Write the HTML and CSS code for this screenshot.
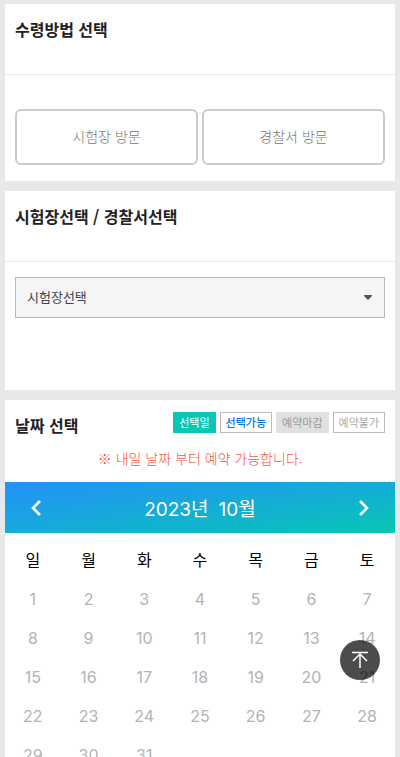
FILE: index.html
```html
<!DOCTYPE html>
<html lang="ko">
<head>
    <meta charset="UTF-8">
    <meta name="viewport" content="width=device-width, initial-scale=1.0">
    <title>방문 예약</title>
    <link rel="stylesheet" href="styles.css">
</head>
<body>
    <section class="card">
        <div class="card-head">
            <h2>수령방법 선택</h2>
        </div>
        <div class="method-list">
            <button type="button" class="method-btn">시험장 방문</button>
            <button type="button" class="method-btn">경찰서 방문</button>
        </div>
    </section>

    <section class="card">
        <div class="card-head">
            <h2><label for="place">시험장선택 / 경찰서선택</label></h2>
        </div>
        <div class="place-box">
            <select id="place">
                <option selected>시험장선택</option>
            </select>
            <svg class="caret" width="8" height="5" viewBox="0 0 8 5"><path d="M0 0h8v1L4 5 0 1z" fill="#555"/></svg>
        </div>
    </section>

    <section class="card">
        <div class="date-head">
            <h2>날짜 선택</h2>
            <ul class="legend">
                <li class="picked">선택일</li>
                <li class="open">선택가능</li>
                <li class="closed">예약마감</li>
                <li class="disabled">예약불가</li>
            </ul>
        </div>
        <p class="notice">※ 내일 날짜 부터 예약 가능합니다.</p>
        <div class="month-bar">
            <button type="button" class="month-nav" aria-label="이전 달">
                <svg width="12" height="16" viewBox="0 0 12 16"><path d="M10 1L3 8l7 7" fill="none" stroke="#fff" stroke-width="2.600"/></svg>
            </button>
            <strong class="month"><span>2023년</span><span>10월</span></strong>
            <button type="button" class="month-nav" aria-label="다음 달">
                <svg width="12" height="16" viewBox="0 0 12 16"><path d="M2 1l7 7-7 7" fill="none" stroke="#fff" stroke-width="2.600"/></svg>
            </button>
        </div>
        <table class="calendar">
            <thead>
                <tr><th>일</th><th>월</th><th>화</th><th>수</th><th>목</th><th>금</th><th>토</th></tr>
            </thead>
            <tbody>
                <tr><td>1</td><td>2</td><td>3</td><td>4</td><td>5</td><td>6</td><td>7</td></tr>
                <tr><td>8</td><td>9</td><td>10</td><td>11</td><td>12</td><td>13</td><td>14</td></tr>
                <tr><td>15</td><td>16</td><td>17</td><td>18</td><td>19</td><td>20</td><td>21</td></tr>
                <tr><td>22</td><td>23</td><td>24</td><td>25</td><td>26</td><td>27</td><td>28</td></tr>
                <tr><td>29</td><td>30</td><td>31</td><td></td><td></td><td></td><td></td></tr>
            </tbody>
        </table>
    </section>

    <button type="button" class="top-btn" aria-label="맨 위로">
        <svg width="16" height="18" viewBox="0 0 16 18" fill="none" stroke="#fff" stroke-width="1.500"><path d="M0 1.500h16M8 3v14M1 10l7-7 7 7"/></svg>
    </button>
</body>
</html>
```
FILE: styles.css
```css
* {
    box-sizing: border-box;
}

body {
    margin: 0;
    padding: 4px 5px;
    background: #e8e8e8;
    font-family: "Noto Sans CJK KR", sans-serif;
    font-size: 14px;
    color: #222;
}

h2, p, ul {
    margin: 0;
    padding: 0;
}

h2 {
    font-size: 16px;
    line-height: 24px;
    font-weight: 700;
}

button, select {
    font-family: inherit;
    cursor: pointer;
}

.card {
    background: #fff;
    margin-bottom: 10px;
}

.card-head {
    padding: 13px 10px 33px;
    border-bottom: 1px solid #e8e8e8;
}

/* pickup method */
.method-list {
    display: flex;
    gap: 4px;
    padding: 34px 10px 16px;
}

.method-btn {
    flex: 1;
    height: 56px;
    padding: 0 0 2px;
    background: #fff;
    border: 2px solid #ccc;
    border-radius: 6px;
    font-size: 14px;
    font-weight: 300;
    color: #777;
}

/* place */
.place-box {
    position: relative;
    padding: 15px 10px 72px;
}

.place-box select {
    display: block;
    width: 100%;
    height: 41px;
    padding: 0 11px 2px;
    appearance: none;
    background: #f5f5f5;
    border: 1px solid #b7b7b7;
    border-radius: 0;
    font-size: 13px;
    color: #444;
}

.caret {
    position: absolute;
    top: 33px;
    right: 23px;
    pointer-events: none;
}

/* date */
.date-head {
    display: flex;
    justify-content: space-between;
    padding: 12px 10px 0;
}

.date-head h2 {
    padding-top: 1px;
}

.legend {
    display: flex;
    gap: 4px;
    list-style: none;
}

.legend li {
    height: 21px;
    padding: 0 5px;
    border: 1px solid #bbb;
    font-size: 11px;
    line-height: 18px;
}

.legend .picked {
    background: #08c7b5;
    border-color: #08c7b5;
    color: #fff;
}

.legend .open {
    font-weight: 500;
    color: #0075e8;
}

.legend .closed {
    background: #e0e0e0;
    border-color: #e0e0e0;
    color: #999;
}

.legend .disabled {
    color: #aaa;
}

.notice {
    padding: 11px 0 14px;
    text-align: center;
    line-height: 20px;
    font-weight: 300;
    color: #f0583a;
}

.month-bar {
    display: flex;
    align-items: center;
    justify-content: space-between;
    height: 51px;
    padding: 0 15px;
    background: linear-gradient(to bottom right, #2490fb, #06c7b3);
}

.month-nav {
    display: flex;
    align-items: center;
    justify-content: center;
    width: 32px;
    height: 32px;
    padding: 0;
    background: none;
    border: none;
}

.month {
    display: flex;
    gap: 10px;
    font-family: Inter, "Noto Sans CJK KR", sans-serif;
    font-size: 19px;
    font-weight: 400;
    color: #fff;
}

.calendar {
    width: 100%;
    table-layout: fixed;
    border-collapse: collapse;
    font-family: Inter, "Noto Sans CJK KR", sans-serif;
    font-size: 16px;
    text-align: center;
}

.calendar th {
    height: 47px;
    padding: 4px 0 0;
    font-weight: 400;
    color: #000;
}

.calendar td {
    height: 39px;
    padding: 0 0 1px;
    font-weight: 400;
    color: #b3b3b3;
}

.top-btn {
    position: fixed;
    right: 20px;
    bottom: 77px;
    display: flex;
    align-items: center;
    justify-content: center;
    width: 40px;
    height: 40px;
    padding: 0;
    background: rgba(0, 0, 0, 0.7);
    border: none;
    border-radius: 50%;
}
```
